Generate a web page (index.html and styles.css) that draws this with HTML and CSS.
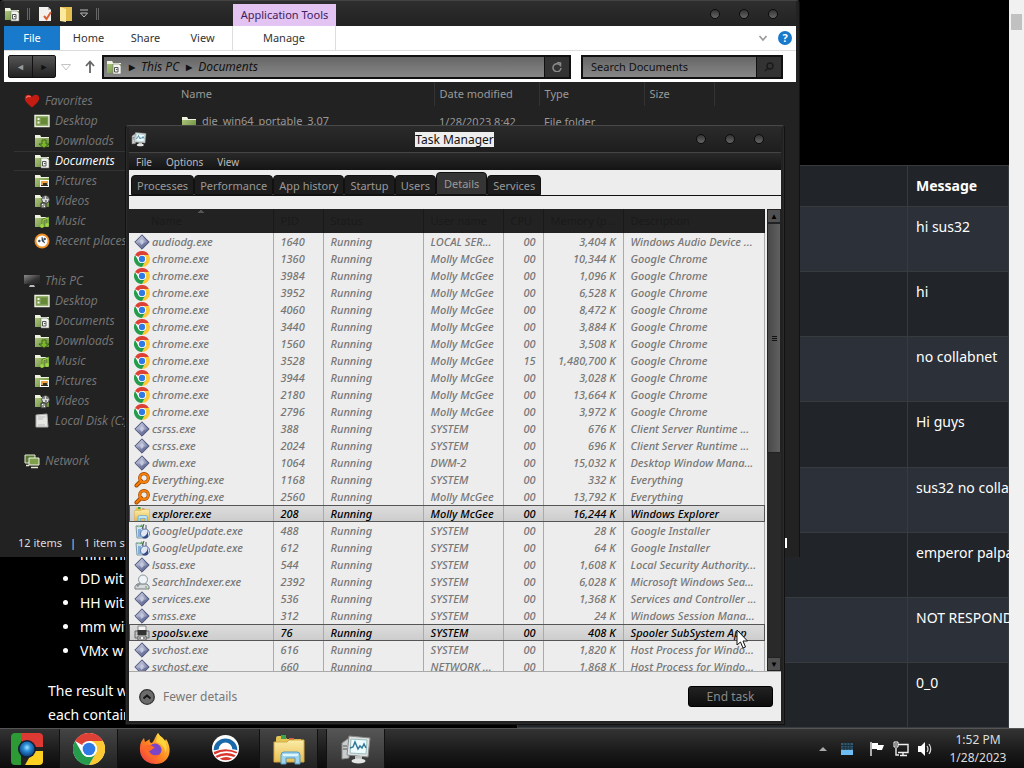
FILE: index.html
```html
<!DOCTYPE html>
<html lang="en">
<head>
<meta charset="utf-8">
<title>Task Manager</title>
<link rel="stylesheet" href="styles.css">
</head>
<body>
<svg class="sprite" aria-hidden="true">
  <defs>
    <linearGradient id="g-gem" x1="0" y1="0" x2="1" y2="1"><stop offset="0" stop-color="#c8cde2"/><stop offset=".5" stop-color="#8289b0"/><stop offset="1" stop-color="#4c5278"/></linearGradient>
    <linearGradient id="g-folder" x1="0" y1="0" x2="1" y2="1"><stop offset="0" stop-color="#b5cc85"/><stop offset="1" stop-color="#668a38"/></linearGradient>
    <linearGradient id="g-manila" x1="0" y1="0" x2="0" y2="1"><stop offset="0" stop-color="#fbedaa"/><stop offset="1" stop-color="#e8bd4f"/></linearGradient>
    <linearGradient id="g-fox" x1="1" y1="0" x2="0" y2="1"><stop offset="0" stop-color="#ffe14d"/><stop offset=".5" stop-color="#ff8a1f"/><stop offset="1" stop-color="#f0304a"/></linearGradient>
    <radialGradient id="g-orb" cx=".5" cy=".4" r=".6"><stop offset="0" stop-color="#a8e4ff"/><stop offset=".4" stop-color="#2b8fd8"/><stop offset="1" stop-color="#0a3a78"/></radialGradient>
    <linearGradient id="g-screen" x1="0" y1="0" x2="1" y2="1"><stop offset="0" stop-color="#8a8a8a"/><stop offset=".6" stop-color="#333"/><stop offset="1" stop-color="#222"/></linearGradient>
  </defs>
  <symbol id="i-gem" viewBox="0 0 16 16"><path d="M8 .8 15.200 8 8 15.200.8 8Z" fill="url(#g-gem)" stroke="#4b5275"/><path d="m8 2 5 6-5 2-5-2Z" fill="#fff" opacity=".25"/><path d="m6 7 2-2 2 2-1 3-2 1Z" fill="#dfe3f2" opacity=".55"/></symbol>
  <symbol id="i-chrome" viewBox="0 0 32 32"><circle cx="16" cy="16" r="16" fill="#fff"/><path d="M16 16 2.140 8A16 16 0 0 1 29.860 8H16Z" fill="#dd4034"/><path d="M29.860 8A16 16 0 0 1 16 32l6.930-12A8 8 0 0 0 16 8Z" fill="#fcc934"/><path d="M16 32A16 16 0 0 1 2.140 8l6.930 12A8 8 0 0 0 22.930 20Z" fill="#259b4c"/><circle cx="16" cy="16" r="8" fill="#fff"/><circle cx="16" cy="16" r="6.300" fill="#2f7ae5"/></symbol>
  <symbol id="i-every" viewBox="0 0 16 16"><path d="m7 9-4.500 4.500" stroke="#9a4300" stroke-width="4" stroke-linecap="round"/><circle cx="10" cy="6" r="4.300" fill="none" stroke="#9a4300" stroke-width="3.200"/><path d="m7 9-4.500 4.500" stroke="#f57c00" stroke-width="2.400" stroke-linecap="round"/><circle cx="10" cy="6" r="4.300" fill="none" stroke="#f98309" stroke-width="2"/></symbol>
  <symbol id="i-explorer" viewBox="0 0 32 32"><path d="M3 5q0-2 2-2h7l2 3h14v22H3Z" fill="#e4c455"/><path d="M8 2h5v4H8Z" fill="#3fa34b"/><path d="M16 5h5v4h-5Z" fill="#d95b3a"/><path d="M21 7h7v4h-7Z" fill="#e8f0f8"/><path d="M1 9h13l2-2h15v22H1Z" fill="url(#g-manila)" stroke="#d3aa45"/><path d="M8 31V22q0-3 3-3h13q3 0 3 3v9h-5v-6h-9v6Z" fill="#9fd4ee" stroke="#5599c4"/><path d="M10 21h15v2H10Z" fill="#dff4fb"/></symbol>
  <symbol id="i-update" viewBox="0 0 16 16"><path d="M2 3h7l1 12H3Z" fill="#d5e4e8" stroke="#8097a3"/><path d="M2.500 2 5 4.500 8 1l1 3H3Z" fill="#62b34e"/><path d="M4 6h3v8H4Z" fill="#7fb0e0"/><path d="M10 1 8 6m4-4v4" stroke="#456" fill="none"/><circle cx="11" cy="10.500" r="4.500" fill="#dfe7f5" stroke="#607499"/><path d="M14 7v7q-3 3-6 0 5 0 6-7Z" fill="#344b86"/></symbol>
  <symbol id="i-indexer" viewBox="0 0 16 16"><path d="M3 10 1 12.500V15h14v-2.500L13 10Z" fill="#d8dadb" stroke="#777f83"/><circle cx="9" cy="5.500" r="4.500" fill="#edf3f6" stroke="#8b969c"/><path d="m6 9-3 3.500" stroke="#8b969c" stroke-width="2"/><path d="M11 13h2" stroke="#5ba55c"/></symbol>
  <symbol id="i-printer" viewBox="0 0 16 16"><path d="M4 1h8v5H4Z" fill="#f4f4f4" stroke="#888"/><path d="M1 6h14v7H1Z" fill="#bfc1c4" stroke="#666"/><path d="M3.500 5h9v5h-9Z" fill="#333"/><path d="M4 11h8v4H4Z" fill="#f8f8f8" stroke="#555"/><path d="M5 13h2m2 0h2" stroke="#222"/></symbol>
  <symbol id="i-folder" viewBox="0 0 16 16"><path d="M1 2h5l1 2h8v10H1Z" fill="url(#g-folder)"/><path d="M1 2h5l1 2h8v1H1Z" fill="#eef3df"/></symbol>
  <symbol id="i-docs" viewBox="0 0 16 16"><use href="#i-folder"/><path d="M7 5h6l2 2v8H7Z" fill="#f4f4f0" stroke="#777" stroke-width=".6"/><path d="M8.500 8.500H12V13H8.500Z" fill="none" stroke="#555"/><path d="M10 10.500h1.500" stroke="#555"/></symbol>
  <symbol id="i-down" viewBox="0 0 16 16"><use href="#i-folder"/><path d="M8 7h4v4h3l-5 4-5-4h3Z" fill="#79b82e" stroke="#36530f" stroke-width=".8"/></symbol>
  <symbol id="i-pics" viewBox="0 0 16 16"><use href="#i-folder"/><path d="M6 7h9v7H6Z" fill="#fff"/><path d="M7 8h7v4H7Z" fill="#f09d3c"/><path d="M7 12h7v1H7Zm2-2h4v2H9Z" fill="#332"/></symbol>
  <symbol id="i-video" viewBox="0 0 16 16"><use href="#i-folder"/><circle cx="11.500" cy="6.500" r="3.800" fill="#ddd" stroke="#444"/><path d="M10 4v2m3-2v2m-2 2h2M7 10h5v5H7Z" stroke="#333" fill="#999"/><path d="M8 11.500h1m1 2h1" stroke="#fff"/></symbol>
  <symbol id="i-music" viewBox="0 0 16 16"><use href="#i-folder"/><path d="M9 13V7l5-2v7" fill="none" stroke="#29400d" stroke-width="2.400"/><path d="M9 13V7l5-2v7" fill="none" stroke="#a2d94a" stroke-width="1.400"/><circle cx="8" cy="13" r="1.900" fill="#9fd644"/><circle cx="13" cy="12" r="1.900" fill="#9fd644"/></symbol>
  <symbol id="i-desk" viewBox="0 0 16 16"><path d="M1 2.500h14v11H1Z" fill="#7d9b4f" stroke="#eef2e2" stroke-width="1.400"/><path d="M3.500 5h2v2h-2Zm0 3.500h2v2h-2Z" fill="#f4f6ea"/><path d="M7 5h6v6H7Z" fill="#668a38"/></symbol>
  <symbol id="i-recent" viewBox="0 0 16 16"><circle cx="8" cy="8" r="7.500" fill="#ef8f28"/><circle cx="8" cy="8" r="5.600" fill="#fff"/><path d="M8 4v4l3 2M4 8l2-1v2Zm6-3 2 1-2 1Z" stroke="#345" fill="#345" stroke-width=".8"/></symbol>
  <symbol id="i-heart" viewBox="0 0 16 16"><path d="M8 14.500C4 11 .8 8.500.8 5.200.8 1.300 6 .7 8 4c2-3.300 7.200-2.700 7.200 1.200C15.200 8.500 12 11 8 14.500Z" fill="#c51c12"/><path d="M2.500 5C3 3 5 2.500 6.500 4" stroke="#f2796c" stroke-width="1.200" fill="none"/></symbol>
  <symbol id="i-pc" viewBox="0 0 16 16"><path d="M0 2h16v9H0Z" fill="url(#g-screen)"/><path d="M6 12h4l1 2H5Z" fill="#bbb"/></symbol>
  <symbol id="i-disk" viewBox="0 0 16 16"><path d="M2 2 13 1l1 13H2Z" fill="#e6e6e3" stroke="#aaa"/><path d="M4 4h7M4 6h5m-5 6h7" stroke="#bbb"/></symbol>
  <symbol id="i-net" viewBox="0 0 16 16"><path d="M1 2h10v8H1Z" fill="#5c793a" stroke="#e3ead0"/><path d="M5 5h10v7H5Z" fill="#7e9f4b" stroke="#f0f4e4"/><path d="M7 14.500h7M2 12.500h3" stroke="#e3ead0" stroke-width="1.500"/></symbol>
  <symbol id="i-monitor" viewBox="0 0 32 32"><path d="m2 10 7-5v20l-7 1Z" fill="#c9cdcd" stroke="#888"/><path d="M3 13h4m-4 3h4" stroke="#555"/><path d="m9 3 21 2-2 19-21-2Z" fill="#dfe2e2" stroke="#888"/><path d="m11 6 16 1-1 14-16-1Z" fill="#eefcff" stroke="#9bb"/><path d="m10 15 3-1 2-5 3 7 2-3 2 2 2-4 2 4" fill="none" stroke="#337798" stroke-width="1.500"/><path d="M15 23h7v4h-7Z" fill="#bcc0c0"/><ellipse cx="18.500" cy="28" rx="7" ry="2.500" fill="#e3e5e5"/></symbol>
</svg>

<main class="desktop">
  <div class="browser">
    <article class="article">
      <ul>
        <li>mm mi</li>
        <li>DD wit</li>
        <li>HH wit</li>
        <li>mm wit</li>
        <li>VMx w</li>
      </ul>
      <p>The result w<br>each contain</p>
    </article>
    <table class="chat">
      <thead><tr><th></th><th>Message</th></tr></thead>
      <tbody>
        <tr><td></td><td>hi sus32</td></tr>
        <tr><td></td><td>hi</td></tr>
        <tr><td></td><td>no collabnet</td></tr>
        <tr><td></td><td>Hi guys</td></tr>
        <tr><td></td><td>sus32 no colla</td></tr>
        <tr><td></td><td>emperor palpa</td></tr>
        <tr><td></td><td>NOT RESPOND</td></tr>
        <tr><td></td><td>0_0</td></tr>
      </tbody>
    </table>
    <div class="page-scroll"></div>
  </div>

  <section class="window explorer" aria-label="Documents">
    <header class="ex-title">
      <div class="quick">
        <svg class="ic"><use href="#i-docs"/></svg>
        <i class="grip"></i>
        <svg class="ic" viewBox="0 0 16 16"><path d="M2 1h9l3 3v11H2Z" fill="#f3f1ee"/><path d="M11 1v3h3Z" fill="#bbb"/><path d="m7 10 2.500 3L14 6" fill="none" stroke="#d9613a" stroke-width="2"/></svg>
        <svg class="ic" viewBox="0 0 16 16"><path d="M2 1h12v14H2Z" fill="#e3bd4e"/><path d="m2 1 6 2v13l-6-1Z" fill="#fbe9a0"/></svg>
        <svg class="ic small" viewBox="0 0 10 10"><path d="M1 1h8M1.500 4h7L5 8Z" fill="none" stroke="#bbb"/></svg>
        <i class="grip"></i>
      </div>
      <div class="context-title">Application Tools</div>
      <div class="dots"><button aria-label="Minimize"></button><button aria-label="Maximize"></button><button aria-label="Close"></button></div>
    </header>
    <nav class="ribbon">
      <button class="file">File</button>
      <button>Home</button>
      <button>Share</button>
      <button>View</button>
      <button class="manage">Manage</button>
      <span class="ribbon-end">
        <svg class="ic small" viewBox="0 0 10 10"><path d="m1.500 3 3.500 4 3.500-4" fill="none" stroke="#999" stroke-width="1.600"/></svg>
        <button class="help" aria-label="Help">?</button>
      </span>
    </nav>
    <div class="address-row">
      <div class="navs"><button aria-label="Back">◄</button><button aria-label="Forward" class="off">►</button></div>
      <svg class="ic small" viewBox="0 0 10 10"><path d="M.5 2.500h9L5 8Z" fill="none" stroke="#c4c4c4"/></svg>
      <svg class="up" viewBox="0 0 12 14"><path d="M6 13V2M2 6l4-4.500L10 6" fill="none" stroke="#666" stroke-width="1.800"/></svg>
      <div class="address">
        <svg class="ic"><use href="#i-docs"/></svg>
        <b>▶</b><em>This PC</em><b>▶</b><em>Documents</em>
        <button class="end" aria-label="Refresh"><svg class="ic small" viewBox="0 0 10 10"><path d="M8 3a4 4 0 1 0 1 3M5 0l3.500 1v3.500" fill="none" stroke="#8b8b8b" stroke-width="1.500"/></svg></button>
      </div>
      <div class="search">
        <input type="text" aria-label="Search Documents" value="Search Documents">
        <button class="end" aria-label="Search"><svg class="ic small" viewBox="0 0 10 10"><circle cx="6" cy="4" r="3" fill="none" stroke="#1a1a1a" stroke-width="1.400"/><path d="M4 6 1 9" stroke="#1a1a1a" stroke-width="1.400"/></svg></button>
      </div>
    </div>
    <div class="ex-body">
      <nav class="tree">
        <a class="root" href="#fav"><svg class="ic"><use href="#i-heart"/></svg>Favorites</a>
        <a href="#d"><svg class="ic"><use href="#i-desk"/></svg>Desktop</a>
        <a href="#d"><svg class="ic"><use href="#i-down"/></svg>Downloads</a>
        <a href="#d" class="current"><svg class="ic"><use href="#i-docs"/></svg>Documents</a>
        <a href="#d"><svg class="ic"><use href="#i-pics"/></svg>Pictures</a>
        <a href="#d"><svg class="ic"><use href="#i-video"/></svg>Videos</a>
        <a href="#d"><svg class="ic"><use href="#i-music"/></svg>Music</a>
        <a href="#d"><svg class="ic"><use href="#i-recent"/></svg>Recent places</a>
        <a class="root spaced" href="#pc"><svg class="ic"><use href="#i-pc"/></svg>This PC</a>
        <a href="#d"><svg class="ic"><use href="#i-desk"/></svg>Desktop</a>
        <a href="#d"><svg class="ic"><use href="#i-docs"/></svg>Documents</a>
        <a href="#d"><svg class="ic"><use href="#i-down"/></svg>Downloads</a>
        <a href="#d"><svg class="ic"><use href="#i-music"/></svg>Music</a>
        <a href="#d"><svg class="ic"><use href="#i-pics"/></svg>Pictures</a>
        <a href="#d"><svg class="ic"><use href="#i-video"/></svg>Videos</a>
        <a href="#d"><svg class="ic"><use href="#i-disk"/></svg>Local Disk (C:)</a>
        <a class="root spaced" href="#net"><svg class="ic"><use href="#i-net"/></svg>Network</a>
      </nav>
      <table class="files">
        <colgroup><col class="f-name"><col class="f-date"><col class="f-type"><col class="f-size"><col></colgroup>
        <thead><tr><th>Name</th><th>Date modified</th><th>Type</th><th>Size</th><th></th></tr></thead>
        <tbody><tr><td><svg class="ic"><use href="#i-folder"/></svg>die_win64_portable_3.07</td><td>1/28/2023 8:42</td><td>File folder</td><td></td><td></td></tr></tbody>
      </table>
    </div>
    <footer class="ex-status"><span>12 items</span><span>|</span><span>1 item s</span><i></i></footer>
  </section>

  <section class="window taskman" aria-label="Task Manager">
    <header class="tm-title">
      <svg class="ic"><use href="#i-monitor"/></svg>
      <h1>Task Manager</h1>
      <div class="dots"><button aria-label="Minimize"></button><button aria-label="Maximize"></button><button aria-label="Close"></button></div>
    </header>
    <nav class="menu"><button>File</button><button>Options</button><button>View</button></nav>
    <div class="tabs">
      <button>Processes</button><button>Performance</button><button>App history</button><button>Startup</button><button>Users</button><button class="active">Details</button><button>Services</button>
    </div>
    <div class="list-wrap">
      <div class="list">
        <table class="procs">
          <colgroup><col class="c-name"><col class="c-pid"><col class="c-status"><col class="c-user"><col class="c-cpu"><col class="c-mem"><col></colgroup>
          <thead><tr><th class="sorted">Name</th><th>PID</th><th>Status</th><th>User name</th><th>CPU</th><th>Memory (p...</th><th>Description</th></tr></thead>
          <tbody>
            <tr><td><svg class="ic"><use href="#i-gem"/></svg>audiodg.exe</td><td>1640</td><td>Running</td><td>LOCAL SER...</td><td>00</td><td>3,404 K</td><td>Windows Audio Device ...</td></tr>
            <tr><td><svg class="ic"><use href="#i-chrome"/></svg>chrome.exe</td><td>1360</td><td>Running</td><td>Molly McGee</td><td>00</td><td>10,344 K</td><td>Google Chrome</td></tr>
            <tr><td><svg class="ic"><use href="#i-chrome"/></svg>chrome.exe</td><td>3984</td><td>Running</td><td>Molly McGee</td><td>00</td><td>1,096 K</td><td>Google Chrome</td></tr>
            <tr><td><svg class="ic"><use href="#i-chrome"/></svg>chrome.exe</td><td>3952</td><td>Running</td><td>Molly McGee</td><td>00</td><td>6,528 K</td><td>Google Chrome</td></tr>
            <tr><td><svg class="ic"><use href="#i-chrome"/></svg>chrome.exe</td><td>4060</td><td>Running</td><td>Molly McGee</td><td>00</td><td>8,472 K</td><td>Google Chrome</td></tr>
            <tr><td><svg class="ic"><use href="#i-chrome"/></svg>chrome.exe</td><td>3440</td><td>Running</td><td>Molly McGee</td><td>00</td><td>3,884 K</td><td>Google Chrome</td></tr>
            <tr><td><svg class="ic"><use href="#i-chrome"/></svg>chrome.exe</td><td>1560</td><td>Running</td><td>Molly McGee</td><td>00</td><td>3,508 K</td><td>Google Chrome</td></tr>
            <tr><td><svg class="ic"><use href="#i-chrome"/></svg>chrome.exe</td><td>3528</td><td>Running</td><td>Molly McGee</td><td>15</td><td>1,480,700 K</td><td>Google Chrome</td></tr>
            <tr><td><svg class="ic"><use href="#i-chrome"/></svg>chrome.exe</td><td>3944</td><td>Running</td><td>Molly McGee</td><td>00</td><td>3,028 K</td><td>Google Chrome</td></tr>
            <tr><td><svg class="ic"><use href="#i-chrome"/></svg>chrome.exe</td><td>2180</td><td>Running</td><td>Molly McGee</td><td>00</td><td>13,664 K</td><td>Google Chrome</td></tr>
            <tr><td><svg class="ic"><use href="#i-chrome"/></svg>chrome.exe</td><td>2796</td><td>Running</td><td>Molly McGee</td><td>00</td><td>3,972 K</td><td>Google Chrome</td></tr>
            <tr><td><svg class="ic"><use href="#i-gem"/></svg>csrss.exe</td><td>388</td><td>Running</td><td>SYSTEM</td><td>00</td><td>676 K</td><td>Client Server Runtime ...</td></tr>
            <tr><td><svg class="ic"><use href="#i-gem"/></svg>csrss.exe</td><td>2024</td><td>Running</td><td>SYSTEM</td><td>00</td><td>696 K</td><td>Client Server Runtime ...</td></tr>
            <tr><td><svg class="ic"><use href="#i-gem"/></svg>dwm.exe</td><td>1064</td><td>Running</td><td>DWM-2</td><td>00</td><td>15,032 K</td><td>Desktop Window Mana...</td></tr>
            <tr><td><svg class="ic"><use href="#i-every"/></svg>Everything.exe</td><td>1168</td><td>Running</td><td>SYSTEM</td><td>00</td><td>332 K</td><td>Everything</td></tr>
            <tr><td><svg class="ic"><use href="#i-every"/></svg>Everything.exe</td><td>2560</td><td>Running</td><td>Molly McGee</td><td>00</td><td>13,792 K</td><td>Everything</td></tr>
            <tr class="sel"><td><svg class="ic"><use href="#i-explorer"/></svg>explorer.exe</td><td>208</td><td>Running</td><td>Molly McGee</td><td>00</td><td>16,244 K</td><td>Windows Explorer</td></tr>
            <tr><td><svg class="ic"><use href="#i-update"/></svg>GoogleUpdate.exe</td><td>488</td><td>Running</td><td>SYSTEM</td><td>00</td><td>28 K</td><td>Google Installer</td></tr>
            <tr><td><svg class="ic"><use href="#i-update"/></svg>GoogleUpdate.exe</td><td>612</td><td>Running</td><td>SYSTEM</td><td>00</td><td>64 K</td><td>Google Installer</td></tr>
            <tr><td><svg class="ic"><use href="#i-gem"/></svg>lsass.exe</td><td>544</td><td>Running</td><td>SYSTEM</td><td>00</td><td>1,608 K</td><td>Local Security Authority...</td></tr>
            <tr><td><svg class="ic"><use href="#i-indexer"/></svg>SearchIndexer.exe</td><td>2392</td><td>Running</td><td>SYSTEM</td><td>00</td><td>6,028 K</td><td>Microsoft Windows Sea...</td></tr>
            <tr><td><svg class="ic"><use href="#i-gem"/></svg>services.exe</td><td>536</td><td>Running</td><td>SYSTEM</td><td>00</td><td>1,368 K</td><td>Services and Controller ...</td></tr>
            <tr><td><svg class="ic"><use href="#i-gem"/></svg>smss.exe</td><td>312</td><td>Running</td><td>SYSTEM</td><td>00</td><td>24 K</td><td>Windows Session Mana...</td></tr>
            <tr class="sel"><td><svg class="ic"><use href="#i-printer"/></svg>spoolsv.exe</td><td>76</td><td>Running</td><td>SYSTEM</td><td>00</td><td>408 K</td><td>Spooler SubSystem App</td></tr>
            <tr><td><svg class="ic"><use href="#i-gem"/></svg>svchost.exe</td><td>616</td><td>Running</td><td>SYSTEM</td><td>00</td><td>1,820 K</td><td>Host Process for Windo...</td></tr>
            <tr><td><svg class="ic"><use href="#i-gem"/></svg>svchost.exe</td><td>660</td><td>Running</td><td>NETWORK ...</td><td>00</td><td>1,868 K</td><td>Host Process for Windo...</td></tr>
          </tbody>
        </table>
      </div>
      <div class="scroll"><button aria-label="Scroll up">▲</button><div class="track"><div class="thumb"></div></div><button aria-label="Scroll down">▼</button></div>
    </div>
    <footer class="tm-foot">
      <button class="fewer"><svg class="ic" viewBox="0 0 16 16"><circle cx="8" cy="8" r="7.300" fill="#6b6b6b" stroke="#333" stroke-width="1.300"/><path d="m4.500 9.500 3.500-3 3.500 3" fill="none" stroke="#111" stroke-width="1.800"/></svg>Fewer details</button>
      <button class="end-task">End task</button>
    </footer>
  </section>
  <svg class="cursor" viewBox="0 0 12 20"><path d="M1 1v15l3.500-3 2.500 6 2.500-1L7 12h4.500Z" fill="#fff" stroke="#111"/></svg>
</main>

<footer class="taskbar">
  <button class="task start" aria-label="Start"><svg viewBox="0 0 32 32"><rect width="32" height="32" rx="4" fill="#222"/><path d="M4 0h6v32H4q-4 0-4-4V4q0-4 4-4Z" fill="#2e9a35"/><path d="M10 0h18q4 0 4 4v10H19L10 8Z" fill="#dc3a33"/><path d="M32 18v10q0 4-4 4H14l8-14Z" fill="#fbd021"/><circle cx="16" cy="16" r="9" fill="#111c30"/><circle cx="16" cy="16" r="7.500" fill="url(#g-orb)"/></svg></button>
  <button class="task open" aria-label="Chrome"><svg><use href="#i-chrome"/></svg></button>
  <button class="task wide" aria-label="Firefox"><svg viewBox="0 0 32 32"><path d="M19 0c2 4 5 4 7 8l1-2c8 12 2 25-10 25C6 31 0 24 1 14c0-4 2-7 4-9l1 4 5-3c-1 2 0 4 2 4 3-3 3-7 6-10Z" fill="url(#g-fox)"/><path d="M19 0c2 4 5 4 7 8 2 5 2 9 0 12 1-6-5-10-9-11 1-2 1-6 2-9Z" fill="#ffd43a"/><circle cx="16" cy="17" r="6.500" fill="#7a45c9"/><path d="M5 13c4-2 8-1 11 2-3 0-3 3-6 3 2 5 7 5 11 3-5 8-16 3-16-8Z" fill="#ff6a28"/></svg></button>
  <button class="task mid" aria-label="Campaign"><svg viewBox="0 0 32 32"><circle cx="16" cy="16" r="16" fill="#fff"/><path d="M2 18a14 14 0 1 1 28 0q-3-1-6-1a8 8 0 0 0-16 0Q5 18 2 18Z" fill="#1a6aab"/><path d="M2 20q14-6 28 0l-1 2q-13-6-26 1Zm2 5q12-7 24-1l-2 2q-10-4-20 1Zm5 3q8-4 15 0-8 4-15 0Z" fill="#d8372f"/></svg></button>
  <button class="task open" aria-label="File Explorer"><svg><use href="#i-explorer"/></svg></button>
  <button class="task open lit" aria-label="Task Manager"><svg><use href="#i-monitor"/></svg></button>
  <div class="tray">
    <svg class="ic" viewBox="0 0 16 16"><path d="m4 10 4-4 4 4Z" fill="#aaa"/></svg>
    <svg class="ic" viewBox="0 0 16 16"><path d="M2 2h12v8H2Z" fill="#335a70"/><path d="M2 9h12v5H2Z" fill="#6ebcf2"/><path d="M2 4.500h12M2 7h12M5 2v7m3-7v7m3-7v7" stroke="#18303f"/></svg>
    <svg class="ic flag" viewBox="0 0 16 16"><path d="M2 1v14" stroke="#fff" stroke-width="1.300"/><path d="M3 2h6v2h6l-2 5H8V8H3Z" fill="#fff"/></svg>
    <svg class="ic" viewBox="0 0 16 16"><path d="M5 3.500h10v8H5m5 0V14M7 14.500h7M3 7v7h3" fill="none" stroke="#eee" stroke-width="1.400"/><path d="M1 1h4v5H1Z" fill="#222" stroke="#fff"/><path d="M3 2v3" stroke="#fff"/></svg>
    <svg class="ic" viewBox="0 0 16 16"><path d="M1 5h3l4-4v14l-4-4H1Z" fill="#fff"/><path d="M10 5q2 3 0 6m2-8q3.500 5 0 10" fill="none" stroke="#ddd" stroke-width="1.200"/></svg>
    <time>1:52 PM<br>1/28/2023</time>
  </div>
</footer>
</body>
</html>
```
FILE: styles.css
```css
* { box-sizing: border-box; }
body {
  margin: 0;
  height: 100vh;
  display: flex;
  flex-direction: column;
  overflow: hidden;
  background: #000;
  font: 11px/16px "Noto Sans", "Liberation Sans", sans-serif;
}
button { margin: 0; padding: 0; border: 0; background: none; font: inherit; color: inherit; }
table { border-collapse: collapse; }
th { font-weight: 400; text-align: left; }
.sprite { position: absolute; width: 0; height: 0; }
.ic { width: 16px; height: 16px; flex: none; }
.ic.small { width: 10px; height: 10px; }
.desktop { position: relative; flex: 1; min-height: 0; overflow: hidden; }

/* page behind the windows */
.browser { height: 100%; display: flex; color: #fff; font-size: 14px; line-height: 24px; }
.article { flex: 1; display: flex; flex-direction: column; justify-content: flex-end; padding: 0 0 1px 48px; }
.article ul { margin: 0 0 16px; padding-left: 32px; }
.article p { margin: 0; }
.chat { width: 492px; height: 563px; align-self: flex-end; table-layout: fixed; background: #212529; }
.chat th, .chat td { padding: 8px; border: 1px solid #373b3e; vertical-align: top; height: 65px; white-space: nowrap; }
.chat th { height: 41px; font-weight: 700; }
.chat th:first-child { width: 390px; }
.chat td:last-child { padding-right: 0; }
.chat tbody tr:nth-child(odd) { background: #2c3038; }
.page-scroll { position: relative; width: 15px; background: linear-gradient(#c1c1c1, #c1c1c1) 2px 14px / 11px 16px no-repeat #f1f1f1; }

.window { position: absolute; display: flex; flex-direction: column; background: #222; }
.dots { display: flex; gap: 19px; }
.dots button { width: 10px; height: 10px; border-radius: 50%; background: linear-gradient(#333, #666); border: 1px solid #0c0c0c; }

/* file explorer */
.explorer { left: 0; top: 0; width: 800px; height: 557px; padding: 0 3px 0 4px; border-top: 1px solid #444; border-right: 1px solid #111; border-radius: 4px 4px 0 0; color: #999; }
.ex-title { flex: none; height: 25px; display: flex; align-items: center; background: linear-gradient(#2e2e2e, #222); }
.quick { width: 229px; display: flex; align-items: center; gap: 5px; }
.grip { width: 3px; height: 12px; margin: 0 2px; border: solid #666; border-width: 0 1px; }
.context-title { width: 103px; height: 22px; align-self: flex-end; background: #e2c3f2; color: #402060; text-align: center; line-height: 22px; }
.ex-title .dots { margin-left: auto; margin-right: 18px; }
.ribbon { flex: none; height: 25px; display: flex; background: #fff; color: #333; border-bottom: 1px solid #ddd; }
.ribbon > button { width: 57px; line-height: 24px; }
.ribbon .file { width: 56px; background: #1979ca; color: #fff; }
.ribbon .manage { width: 104px; margin-left: 1px; border: solid #ddd; border-width: 0 1px; }
.ribbon-end { margin-left: auto; display: flex; align-items: center; gap: 10px; padding-right: 4px; }
.help { width: 14px; height: 14px; border-radius: 50%; background: #1979ca; color: #fff; font-weight: 700; line-height: 14px; }
.address-row { flex: none; height: 31px; display: flex; align-items: center; background: #fff; padding: 0 13px 0 4px; }
.navs { display: flex; border: 1px solid #111; border-radius: 2px; background: linear-gradient(#555, #222); margin-right: 5px; }
.navs button { width: 23px; height: 21px; color: #999; font-size: 9px; line-height: 21px; }
.navs button + button { border-left: 1px solid #111; }
.navs .off { color: #111; }
.up { width: 12px; height: 14px; margin: 0 6px 0 13px; }
.address, .search { height: 24px; display: flex; align-items: center; border: 2px solid #111; background: linear-gradient(#666, #888); color: #111; font-size: 12px; }
.address { flex: 1; padding-left: 2px; margin-right: 10px; }
.address b { font-size: 8px; margin: 0 6px 0 7px; }
.end { width: 25px; height: 20px; margin-left: auto; background: #333; border-left: 1px solid #111; display: flex; align-items: center; justify-content: center; }
.search { width: 202px; }
.search input { flex: 1; min-width: 0; border: 0; padding: 0 0 0 8px; background: none; font: inherit; font-size: 11px; color: #111; }
.ex-body { flex: 1; min-height: 0; display: flex; overflow: hidden; }
.tree { width: 164px; padding: 9px 0 0 10px; font-size: 12px; font-style: italic; font-family: "Open Sans", "Noto Sans", sans-serif; }
.tree a { height: 20px; display: flex; align-items: center; gap: 5px; padding-left: 20px; color: #777; text-decoration: none; white-space: nowrap; }
.tree .root { padding-left: 10px; }
.tree .spaced { margin-top: 20px; }
.tree .current { color: #fff; border: solid #333; border-width: 1px 0; }
.files { flex: 1; align-self: flex-start; table-layout: fixed; }
.f-name { width: 266px; }
.f-date, .f-type { width: 105px; }
.f-size { width: 70px; }
.files th { height: 24px; padding: 0 5px; border-right: 1px solid #333; }
.files th:last-child { border: 0; }
.files th:first-child, .files td:first-child { padding-left: 13px; }
.files td { height: 32px; padding: 0 5px; white-space: nowrap; }
.files svg { margin-right: 5px; vertical-align: middle; }
.ex-status { flex: none; height: 28px; display: flex; align-items: center; gap: 8px; padding: 0 9px 0 14px; color: #ddd; }
.ex-status i { margin-left: auto; width: 2px; height: 10px; background: #fff; }

/* task manager */
.taskman { left: 125px; top: 125px; width: 660px; height: 600px; padding: 0 3px 3px; border: 1px solid #111; border-top-color: #484848; border-radius: 4px 4px 0 0; box-shadow: inset 0 0 0 1px #2b2b2b; color: #999; }
.tm-title { flex: none; height: 26px; display: flex; align-items: center; justify-content: space-between; background: linear-gradient(#2b2b2b, #1e1e1e); padding: 0 17px 0 2px; }
.tm-title h1 { margin: 0 0 0 66px; font-size: 12px; font-weight: 400; line-height: 15px; background: #eee; color: #111; }
.menu { flex: none; height: 18px; display: flex; align-items: center; gap: 14px; padding-left: 7px; background: linear-gradient(#292929, #141414); border-top: 1px solid #444; color: #bbb; font-size: 10px; line-height: 14px; }
.tabs { flex: none; height: 26px; display: flex; align-items: flex-end; background: #ededed; border-bottom: 1px solid #111; padding-left: 2px; }
.tabs button { height: 20px; padding: 0 5px; line-height: 19px; background: #1d1d1d; border: 1px solid #111; border-radius: 4px 4px 0 0; }
.tabs .active { height: 23px; padding: 0 7px; background: #353535; }
.list-wrap { flex: 1; min-height: 0; display: flex; gap: 2px; padding: 13px 0 0; background: #ededed; border-bottom: 1px solid #aaa; }
.list { flex: 1; min-width: 0; overflow: hidden; }
.procs { width: 100%; table-layout: fixed; color: #777; font-size: 11px; line-height: 16px; font-style: italic; font-weight: 500; }
.c-name { width: 144px; }
.c-pid { width: 50px; }
.c-status { width: 100px; }
.c-user { width: 80px; }
.c-cpu { width: 40px; }
.c-mem { width: 80px; }
.procs th { height: 24px; padding: 0 7px; background: #222; color: #1a1a1a; font-style: normal; border-right: 1px solid #191919; white-space: nowrap; overflow: hidden; }
.procs .sorted { background: conic-gradient(from 135deg at 50% 0, #555 0 90deg, #222 0) 50% 0 / 8px 4px no-repeat #222; padding-left: 22px; }
.procs td { height: 17px; padding: 0 7px; border-right: 1px solid #aaa; white-space: nowrap; overflow: hidden; }
.procs td:first-child { padding: 0 0 0 5px; }
.procs td:last-child { padding-right: 0; }
.procs td svg { vertical-align: top; margin-right: 2px; }
.procs td:nth-child(5), .procs td:nth-child(6) { text-align: right; }
.procs .sel { background: linear-gradient(#ddd, #ccc); color: #000; outline: 1px solid #555; outline-offset: -1px; }
.scroll { width: 14px; display: flex; flex-direction: column; background: #292929; }
.scroll button { height: 14px; background: #505050; border: 1px solid #222; color: #000; font-size: 8px; line-height: 12px; }
.track { flex: 1; }
.thumb { height: 53%; border: 1px solid #222; background: repeating-linear-gradient(#111 0 1px, #555 1px 2px) center / 5px 5px no-repeat, linear-gradient(90deg, #494949, #606060); }
.tm-foot { flex: none; height: 49px; display: flex; align-items: center; justify-content: space-between; padding: 0 8px 0 10px; background: #ededed; }
.fewer { display: flex; align-items: center; gap: 8px; color: #777; font-size: 12px; }
.end-task { width: 85px; height: 21px; border: 1px solid #000; border-radius: 3px; background: linear-gradient(#222, #0d0d0d); color: #888; font-size: 12px; }
.cursor { position: absolute; left: 736px; top: 629px; width: 12px; height: 20px; }

.taskbar { flex: none; height: 40px; display: flex; border-top: 1px solid #555; background: linear-gradient(#333, #191919 60%, #0c0c0c); }
.task { width: 59px; display: flex; align-items: center; justify-content: center; }
.task svg { width: 32px; height: 32px; }
.task.wide { width: 74px; }
.task.mid { width: 67px; }
.task.mid svg { width: 27px; height: 27px; }
.task.start { padding-right: 6px; }
.task.open { border: solid #111; border-width: 0 1px; background: linear-gradient(#444, #222); }
.task.open + .lit { margin-left: 8px; }
.task.lit { background: linear-gradient(#555, #333); }
.tray { margin-left: auto; display: flex; align-items: center; gap: 8px; padding-right: 15px; }
.tray .flag { margin-left: 6px; }
.tray time { width: 62px; margin-left: 6px; text-align: center; color: #ddd; font-size: 12px; line-height: 18px; }
```
